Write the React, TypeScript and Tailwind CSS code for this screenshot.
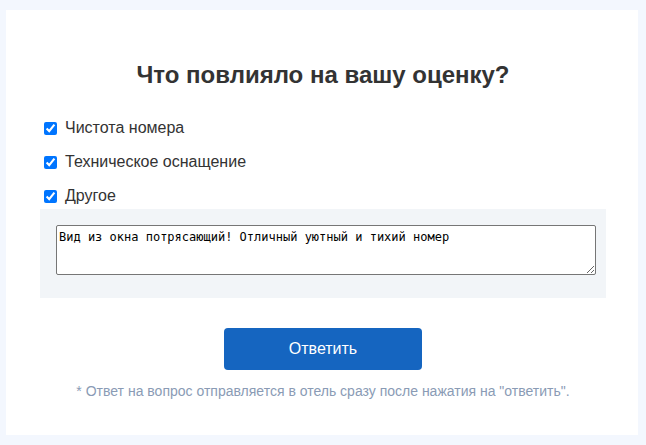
import React from "react";

export default function App() {
  const items = ["Чистота номера", "Техническое оснащение", "Другое"];
  return (
    <div className="w-[646px] h-[445px] bg-[#f3f7fe] pt-[10px] pb-[10px] pl-[6px] pr-[8px]" style={{ fontFamily: '"Liberation Sans", Arial, sans-serif' }}>
      <div className="bg-white h-[425px] pt-[51px] pl-[34px] pr-[32px]">
        <h1 className="text-center text-[24px] leading-[28px] font-bold text-[#333333]">Что повлияло на вашу оценку?</h1>
        <div className="mt-[29px] flex flex-col gap-[14px]">
          {items.map((t) => (
            <label key={t} className="flex items-center h-[20px] pl-[4px] text-[16px] text-[#333333]">
              <input type="checkbox" defaultChecked className="w-[13px] h-[13px] m-0 mr-[8px] accent-[#0075ff]" />
              <span>{t}</span>
            </label>
          ))}
        </div>
        <div className="mt-[3px] bg-[#f2f5f8] h-[89px] pt-[16px] pl-[16px] pr-[10px]">
          <textarea
            defaultValue="Вид из окна потрясающий! Отличный уютный и тихий номер"
            className="block w-full h-[50px] border border-[#767676] rounded-[2px] bg-white px-[2px] pt-[4px] pb-[2px] text-[12px] leading-[14px] text-black"
            style={{ fontFamily: '"DejaVu Sans Mono", monospace' }}
          />
        </div>
        <div className="flex justify-center mt-[30px]">
          <button className="w-[198px] h-[42px] rounded-[4px] bg-[#1565c0] text-white text-[16px]">Ответить</button>
        </div>
        <p className="text-center mt-[11px] text-[14px] text-[#8a9bb5]">* Ответ на вопрос отправляется в отель сразу после нажатия на "ответить".</p>
      </div>
    </div>
  );
}
